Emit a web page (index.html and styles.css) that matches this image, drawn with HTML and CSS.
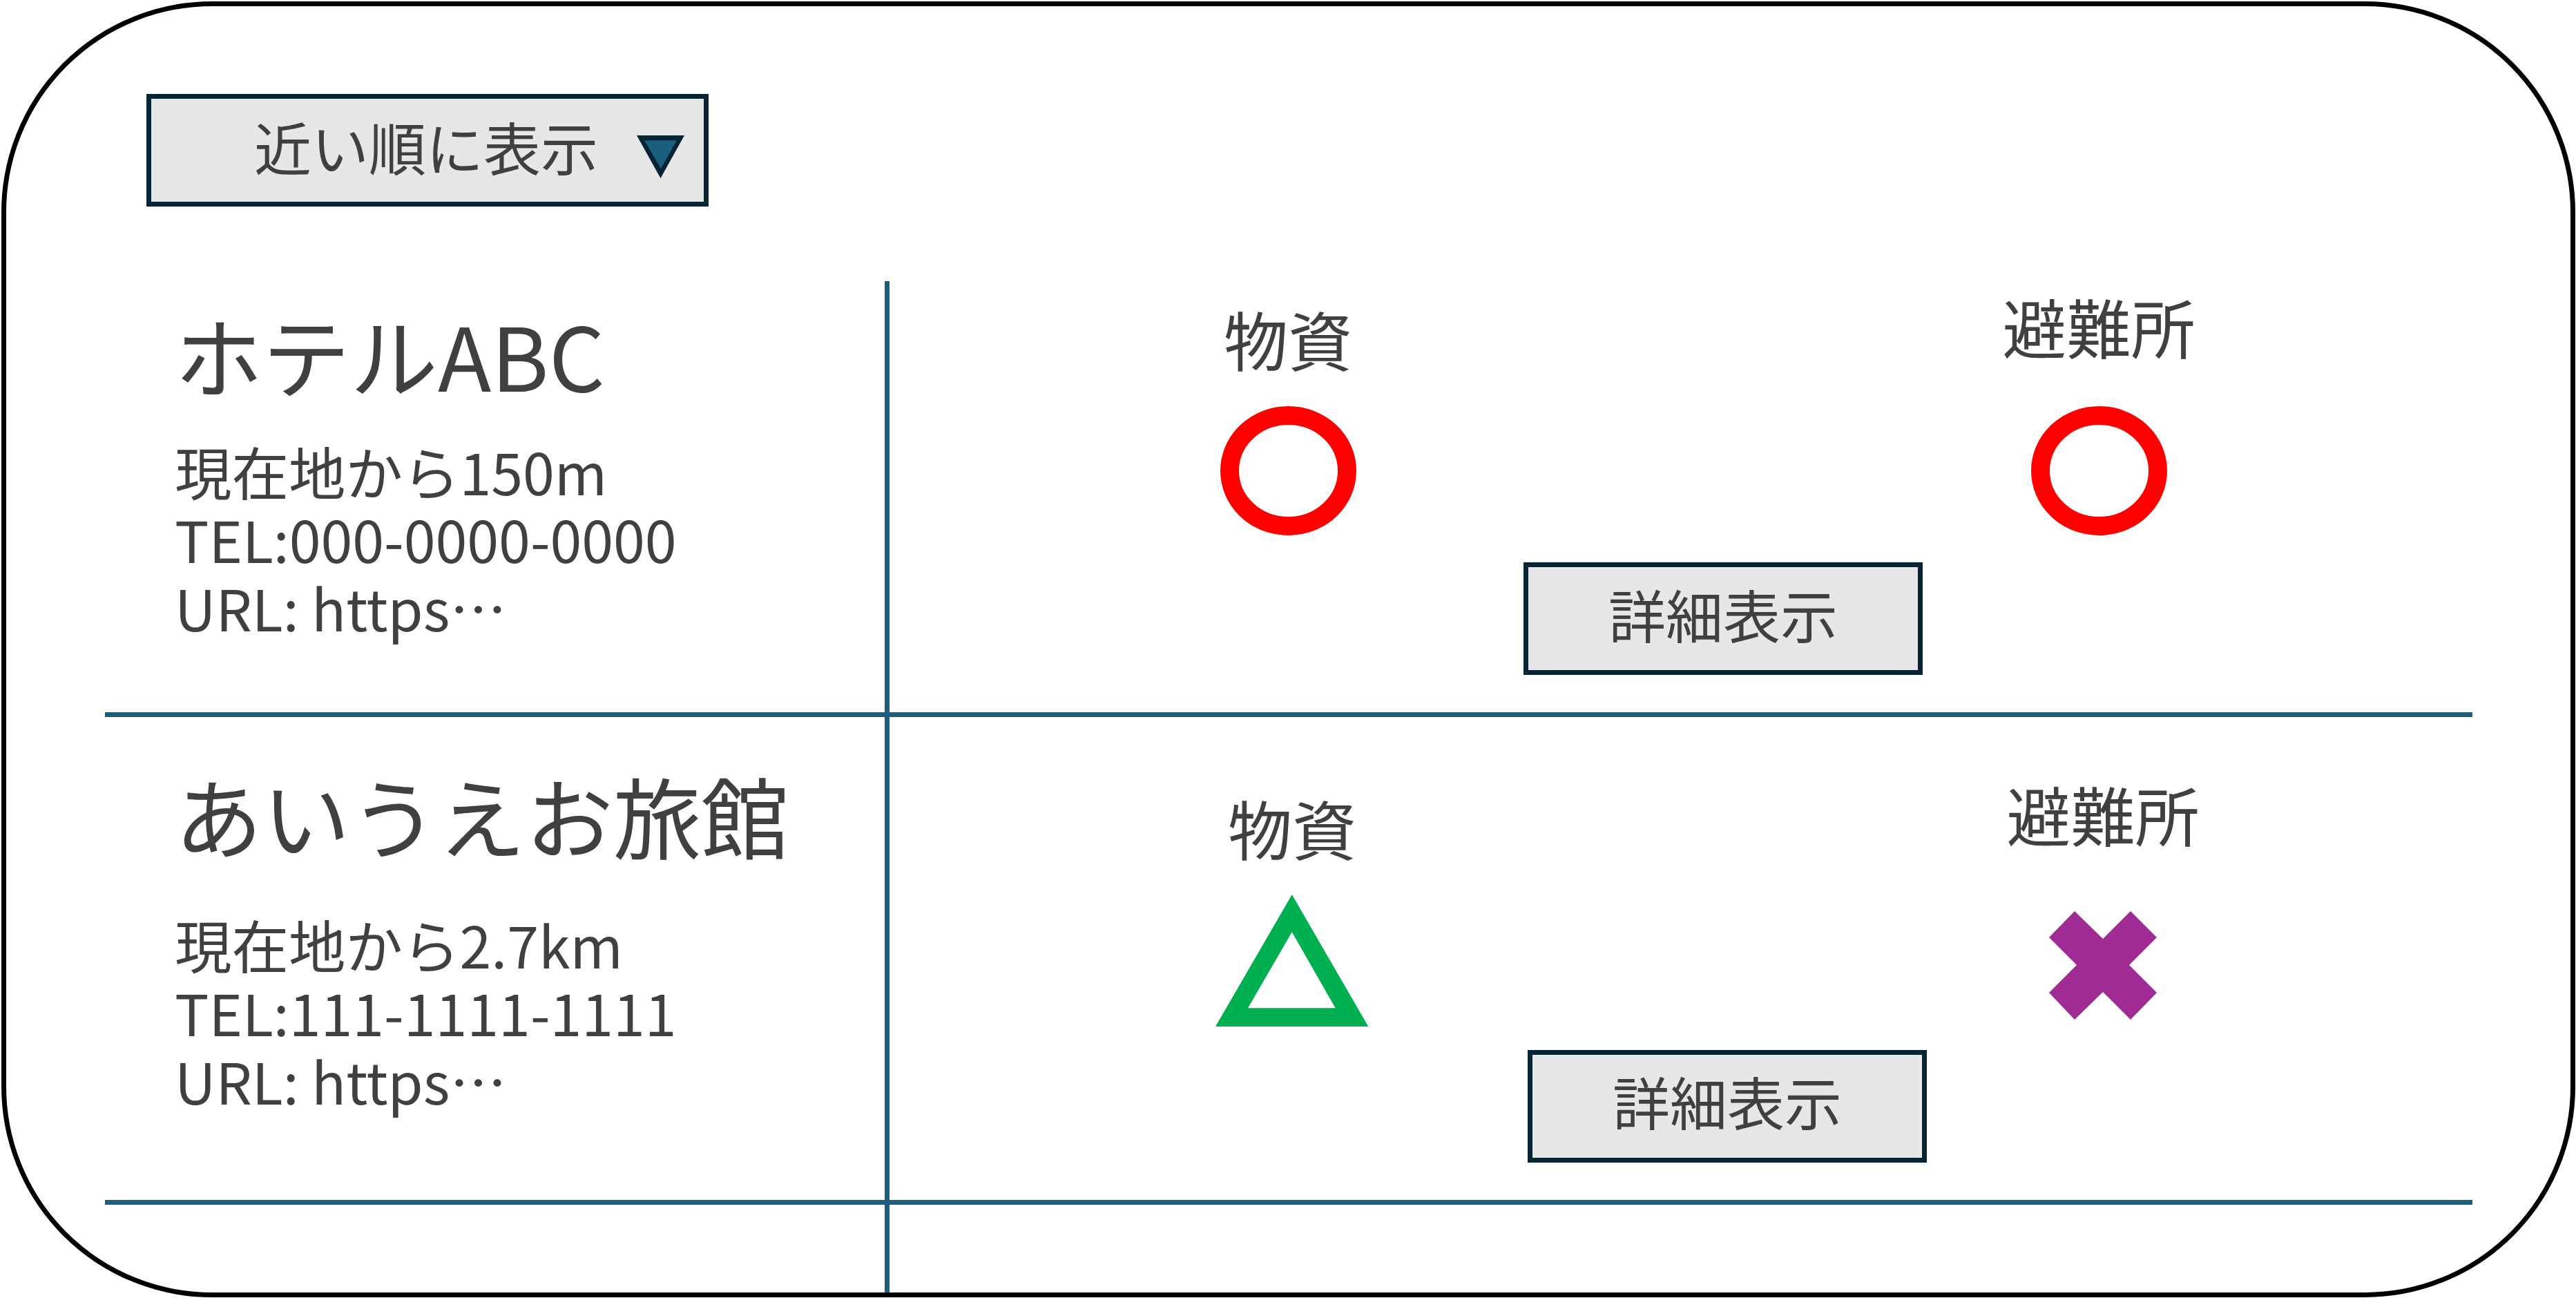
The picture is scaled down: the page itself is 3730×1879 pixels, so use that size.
FILE: index.html
```html
<!DOCTYPE html>
<html lang="ja">
<head>
<meta charset="utf-8">
<title>施設一覧</title>
<link rel="stylesheet" href="styles.css">
</head>
<body>
<div class="frame">
  <div class="sort">
    <span class="sort-label">近い順に表示</span>
    <svg class="sort-arrow" width="69" height="62" viewBox="0 0 69 62" aria-hidden="true">
      <polygon points="0,0 69,0 34.5,62" fill="#062433"/>
      <polygon points="11,7.3 57.7,7.3 35,48" fill="#1a5f80"/>
    </svg>
  </div>

  <div class="list">
    <div class="row row-1">
      <div class="info">
        <div class="name">ホテルABC</div>
        <div class="meta">
          <div class="meta-line">現在地から150m</div>
          <div class="meta-line">TEL:000-0000-0000</div>
          <div class="meta-line">URL: https…</div>
        </div>
      </div>
      <div class="status">
        <div class="marks">
          <div class="mark supplies">
            <div class="mark-label">物資</div>
            <svg class="icon" width="197" height="187" viewBox="0 0 197 187" aria-hidden="true">
              <ellipse cx="98.5" cy="93.5" rx="85" ry="80" fill="none" stroke="#ff0000" stroke-width="27"/>
            </svg>
          </div>
          <div class="mark shelter">
            <div class="mark-label">避難所</div>
            <svg class="icon" width="197" height="187" viewBox="0 0 197 187" aria-hidden="true">
              <ellipse cx="98.5" cy="93.5" rx="85" ry="80" fill="none" stroke="#ff0000" stroke-width="27"/>
            </svg>
          </div>
        </div>
        <div class="detail">詳細表示</div>
      </div>
    </div>

    <div class="row row-2">
      <div class="info">
        <div class="name">あいうえお旅館</div>
        <div class="meta">
          <div class="meta-line">現在地から2.7km</div>
          <div class="meta-line">TEL:111-1111-1111</div>
          <div class="meta-line">URL: https…</div>
        </div>
      </div>
      <div class="status">
        <div class="marks">
          <div class="mark supplies">
            <div class="mark-label">物資</div>
            <svg class="icon" width="222" height="191" viewBox="0 0 222 191" aria-hidden="true">
              <path d="M110.7 0 L0 191 L221.3 191 Z M110.7 54.3 L47 164.3 L173.6 164.3 Z" fill="#00b050" fill-rule="evenodd"/>
            </svg>
          </div>
          <div class="mark shelter">
            <div class="mark-label">避難所</div>
            <svg class="icon" width="156" height="157" viewBox="0 0 156 157" aria-hidden="true">
              <polygon points="37,0 78,40 118,0 156,38 116,78 156,118 118,157 78,117 37,157 0,118 40,78 0,38" fill="#a02b93"/>
            </svg>
          </div>
        </div>
        <div class="detail">詳細表示</div>
      </div>
    </div>

    <div class="tail"><div class="tail-left"></div></div>
  </div>
</div>
</body>
</html>
```

FILE: styles.css
```css
* {
  box-sizing: border-box;
}

html,
body {
  margin: 0;
  background: #ffffff;
}

body {
  font-family: "Noto Sans CJK JP", "Noto Sans", sans-serif;
  color: #404040;
}

.frame {
  margin: 2px 0 0 2px;
  width: 3727px;
  height: 1876px;
  border: 7px solid #000000;
  border-radius: 305px;
  display: flex;
  flex-direction: column;
}

/* sort dropdown */
.sort {
  flex-shrink: 0;
  margin: 127px 0 0 203px;
  width: 814px;
  height: 163px;
  border: 7px solid #062433;
  background: #e7e7e7;
  display: flex;
  align-items: center;
  padding-left: 149px;
}

.sort-label {
  font-size: 83px;
  line-height: 1;
  padding-bottom: 13px;
  white-space: nowrap;
}

.sort-arrow {
  flex-shrink: 0;
  margin-left: 56px;
  margin-top: 19px;
}

/* list */
.list {
  flex: 1;
  min-height: 0;
  margin: 108px 0 0 143px;
  width: 3428px;
  display: flex;
  flex-direction: column;
}

.row {
  flex-shrink: 0;
  display: grid;
  grid-template-columns: 1136px 1fr;
  border-bottom: 7px solid #1b5f80;
}

.row-1 {
  height: 631px;
}

.row-2 {
  height: 706px;
}

.info {
  border-right: 7px solid #1b5f80;
  padding-left: 101px;
}

.name {
  font-size: 127px;
  line-height: 127px;
  white-space: nowrap;
}

.meta {
  font-size: 82.5px;
  white-space: nowrap;
}

.meta-line {
  height: 98.5px;
  line-height: 98.5px;
}

.row-1 .info {
  padding-top: 41.5px;
}

.row-1 .meta {
  margin-top: 56px;
}

.row-2 .info {
  padding-top: 77.5px;
}

.row-2 .meta {
  margin-top: 74px;
}

/* availability marks */
.status {
  display: flex;
  flex-direction: column;
}

.row-2 .status {
  padding-left: 6px;
}

.marks {
  display: flex;
  align-items: flex-start;
  padding-left: 377px;
  gap: 774px;
}

.mark {
  width: 400px;
  display: flex;
  flex-direction: column;
  align-items: center;
}

.mark-label {
  font-size: 93px;
  line-height: 1;
  white-space: nowrap;
}

.icon {
  display: block;
}

.row-1 .supplies .mark-label {
  margin-top: 36px;
}

.row-1 .supplies .icon {
  margin-top: 52px;
}

.row-1 .shelter .mark-label {
  margin-top: 17.5px;
}

.row-1 .shelter .icon {
  margin-top: 70px;
}

.row-2 .supplies .mark-label {
  margin-top: 113px;
}

.row-2 .supplies .icon {
  margin-top: 50.5px;
}

.row-2 .shelter .mark-label {
  margin-top: 93px;
}

.row-2 .shelter .icon {
  margin-top: 94.5px;
}

.detail {
  margin-left: 918px;
  width: 578px;
  height: 163px;
  border: 7px solid #062433;
  background: #e7e7e7;
  display: flex;
  align-items: center;
  justify-content: center;
  font-size: 83px;
  line-height: 1;
  padding-bottom: 15px;
  white-space: nowrap;
}

.row-1 .detail {
  margin-top: 39px;
}

.row-2 .detail {
  margin-top: 34px;
}

.tail {
  flex: 1;
  display: flex;
}

.tail-left {
  width: 1136px;
  border-right: 7px solid #1b5f80;
}
```
